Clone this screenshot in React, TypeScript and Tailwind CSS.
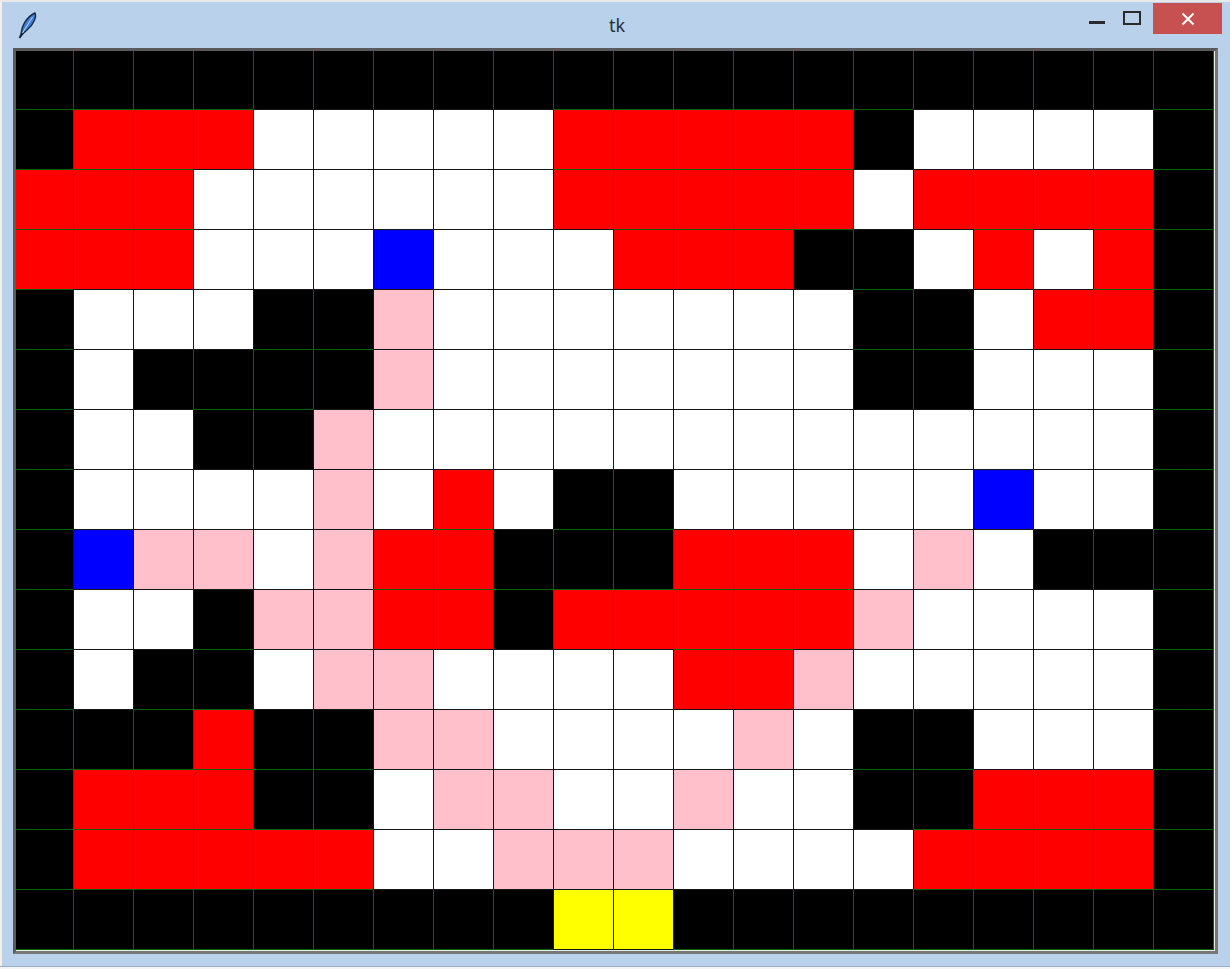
const MAP = [
  "KKKKKKKKKKKKKKKKKKKK",
  "KRRRWWWWWRRRRRKWWWWK",
  "RRRWWWWWWRRRRRWRRRRK",
  "RRRWWWBWWWRRRKKWRWRK",
  "KWWWKKPWWWWWWWKKWRRK",
  "KWKKKKPWWWWWWWKKWWWK",
  "KWWKKPWWWWWWWWWWWWWK",
  "KWWWWPWRWKKWWWWWBWWK",
  "KBPPWPRRKKKRRRWPWKKK",
  "KWWKPPRRKRRRRRPWWWWK",
  "KWKKWPPWWWWRRPWWWWWK",
  "KKKRKKPPWWWWPWKKWWWK",
  "KRRRKKWPPWWPWWKKRRRK",
  "KRRRRRWWPPPWWWWRRRRK",
  "KKKKKKKKKYYKKKKKKKKK",
];

const FILL: Record<string, string> = {
  K: "bg-black",
  R: "bg-[#ff0000]",
  W: "bg-white",
  P: "bg-[#ffc0cb]",
  B: "bg-[#0000ff]",
  Y: "bg-[#ffff00]",
};

// walls and red cells keep a green outline, everything else is outlined black and drawn on top
const light = (c: string) => c !== "K" && c !== "R";

function Cell({ r, c }: { r: number; c: number }) {
  const v = MAP[r][c];
  const left = c === 0 ? v : MAP[r][c - 1];
  const top = r === 0 ? v : MAP[r - 1][c];
  const lastCol = c === MAP[0].length - 1;
  const lastRow = r === MAP.length - 1;
  const lBlack = light(v) || light(left);
  const tBlack = light(v) || light(top);
  return (
    <div
      className={[
        "shrink-0 border-l border-t",
        FILL[v],
        lBlack ? "border-l-[#151515]" : "border-l-[#066406]",
        tBlack ? "border-t-[#151515]" : "border-t-[#066406]",
        lastCol ? "w-[61px] border-r" : "w-[60px]",
        lastCol ? (light(v) ? "border-r-[#151515]" : "border-r-[#066406]") : "",
        lastRow ? "h-[61px] border-b" : "h-[60px]",
        lastRow ? (light(v) ? "border-b-[#151515]" : "border-b-[#066406]") : "",
      ].join(" ")}
    />
  );
}

function Feather() {
  return (
    <svg width="20" height="28" viewBox="0 0 20 28">
      <path
        d="M3 25 C3 16 8 6 17 2 C19 6 15 14 10 18 C8 20 5 22 3 25 Z"
        fill="#3f7fd8"
        stroke="#1b2a44"
        strokeWidth="1.4"
      />
      <path d="M4.5 22 L14.5 6" stroke="#b9d6f6" strokeWidth="1" />
      <path d="M1.5 27 L4 22" stroke="#1b2a44" strokeWidth="1.8" />
    </svg>
  );
}

export default function App() {
  return (
    <div className="w-[1230px] h-[969px] overflow-hidden bg-[#f0f0f0] flex flex-col font-['Segoe_UI','Noto_Sans',sans-serif]">
      <div className="h-[2px] shrink-0 bg-[#e9e9e9]" />
      <div className="ml-[2px] h-[964px] shrink-0 bg-[#b9d1ea] flex flex-col">
        {/* title bar */}
        <div className="h-[46px] shrink-0 flex items-start">
          <div className="ml-[16px] mt-[9px]">
            <Feather />
          </div>
          <div className="flex-1 text-center text-[18px] leading-none text-[#2b2b3a] pt-[14px] pl-[122px]">tk</div>
          <div className="flex items-start">
            <div className="w-[46px] h-[31px] flex items-center justify-center">
              <div className="w-[16px] h-[3px] bg-[#2a2a2a] mt-[10px]" />
            </div>
            <div className="w-[24px] h-[31px] flex items-start justify-center pt-[9px]">
              <div className="w-[18px] h-[14px] border-2 border-[#2a2a2a]" />
            </div>
            <div className="ml-[9px] mr-[8px] mt-[1px] w-[69px] h-[31px] bg-[#c75050] flex items-center justify-center">
              <svg width="14" height="14" viewBox="0 0 14 14">
                <path d="M1.5 1.5 L12.5 12.5 M12.5 1.5 L1.5 12.5" stroke="white" strokeWidth="2" />
              </svg>
            </div>
          </div>
        </div>
        {/* canvas */}
        <div className="pl-[11px]">
          <div className="w-[1205px] border-[3px] border-t-[#5a5a5a] border-l-[#5a5a5a] border-r-[#777777] border-b-[#777777]">
            <div className="w-[1199px] h-[900px] overflow-hidden bg-[#dff0df]">
              <div className="-ml-[3px] -mt-[2px] flex flex-col">
                {MAP.map((row, r) => (
                  <div key={r} className="flex">
                    {row.split("").map((_, c) => (
                      <Cell key={c} r={r} c={c} />
                    ))}
                  </div>
                ))}
              </div>
            </div>
          </div>
        </div>
      </div>
      <div className="h-[1px] shrink-0 bg-[#9aaec4]" />
      <div className="flex-1 bg-[#f4f4f4]" />
    </div>
  );
}
